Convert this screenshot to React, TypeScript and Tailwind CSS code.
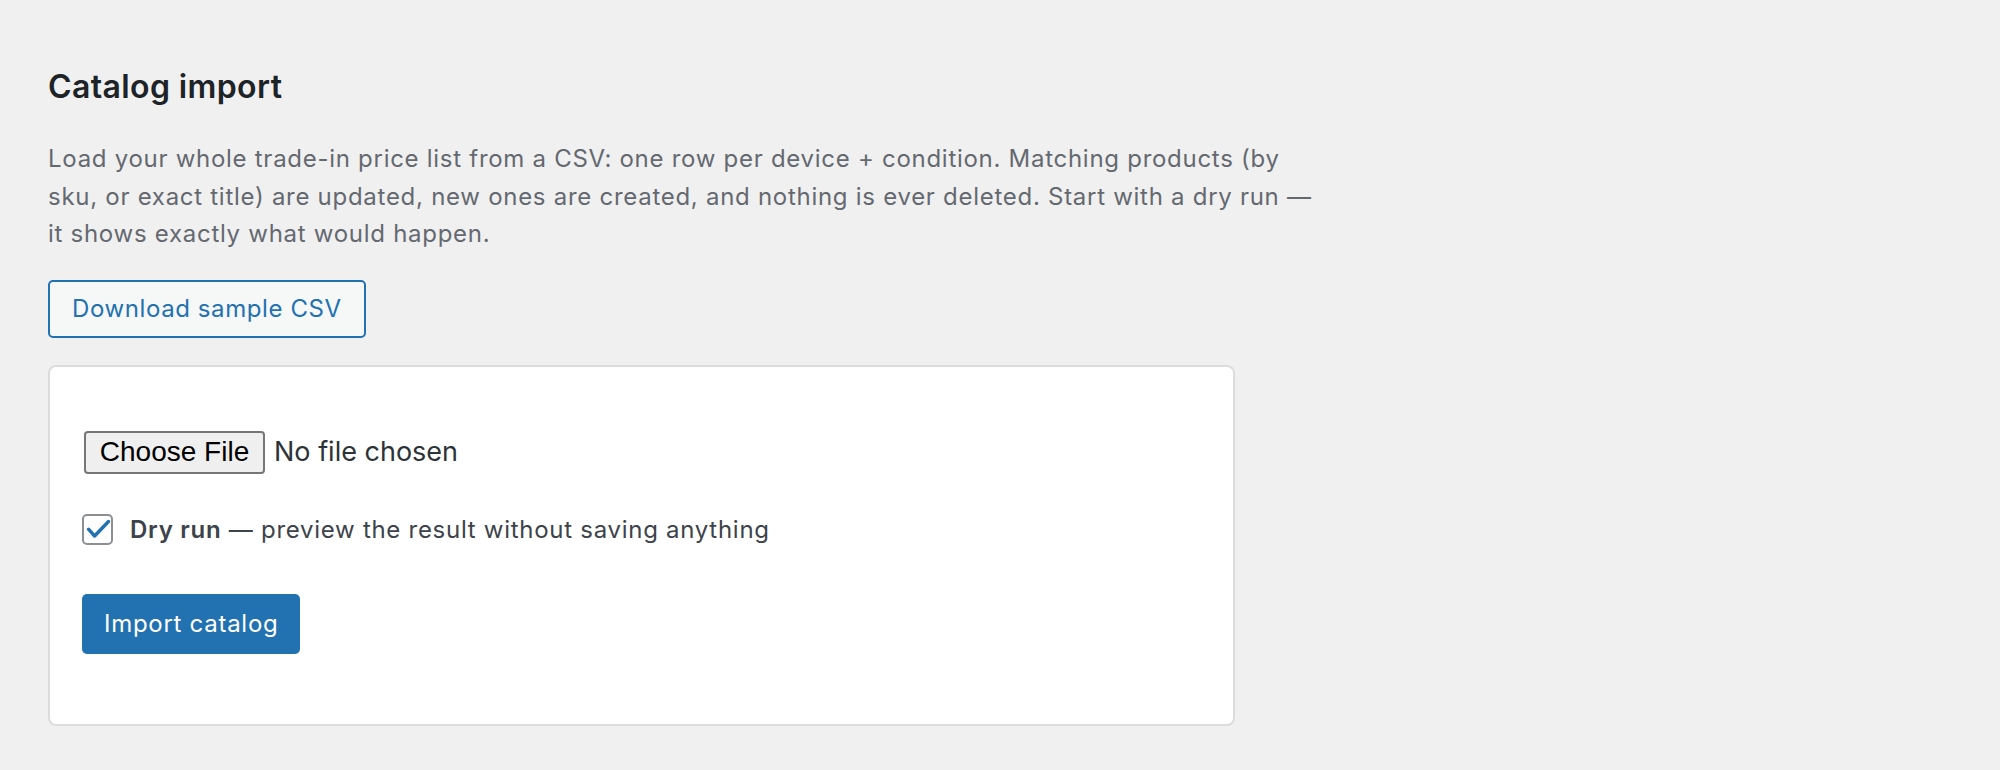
import { useState } from "react";

function CheckIcon() {
  return (
    <svg viewBox="0 0 31 31" className="absolute -left-[2px] -top-[2px] h-[31px] w-[31px]" aria-hidden="true">
      <path
        d="M6.5 15.2 L12.6 22 L26.5 7.5"
        fill="none"
        stroke="#2271b1"
        strokeWidth="3.4"
        strokeLinecap="round"
        strokeLinejoin="round"
      />
    </svg>
  );
}

export default function App() {
  const [dryRun, setDryRun] = useState(true);
  const [fileName, setFileName] = useState<string | null>(null);

  return (
    <div className="min-h-screen bg-[#f0f0f1] pl-12 pt-[66px] font-['Inter','Noto_Sans',sans-serif]">
      <h2 className="text-[32px] leading-[42px] font-semibold tracking-[0.012em] text-[#1d2327]">Catalog import</h2>

      <p className="mt-[32px] max-w-[1270px] text-[24px] leading-[37.5px] tracking-[0.03em] text-[#646970]">
        Load your whole trade-in price list from a CSV: one row per device + condition. Matching products (by
        sku, or exact title) are updated, new ones are created, and nothing is ever deleted. Start with a dry run —
        it shows exactly what would happen.
      </p>

      <a
        href="#"
        className="mt-[27px] inline-flex h-[58px] items-center rounded-[5px] border-2 border-[#2271b1] bg-[#f6f7f7] px-[22px] text-[24px] tracking-[0.025em] text-[#2271b1]"
      >
        Download sample CSV
      </a>

      <form
        onSubmit={(e) => e.preventDefault()}
        className="mt-[27px] w-[1187px] rounded-[8px] border-2 border-[#dcdcde] bg-white pt-[64px] pb-[70px] pl-[32px]"
      >
        <label className="flex h-[43px] items-center gap-[9px] text-[27px]">
          <input
            type="file"
            accept=".csv"
            className="hidden"
            onChange={(e) => setFileName(e.target.files?.[0]?.name ?? null)}
          />
          <span className="ml-[2px] flex h-[43px] w-[181px] items-center justify-center rounded-[4px] border-2 border-[#767676] bg-[#efefef] font-['Liberation_Sans',Arial,sans-serif] text-[28px] text-black">
            Choose File
          </span>
          <span className="text-[#2c3338]">{fileName ?? "No file chosen"}</span>
        </label>

        <label className="mt-[40px] flex items-center gap-[17px] text-[24px] leading-[31px] tracking-[0.03em] text-[#3c434a]">
          <input
            type="checkbox"
            checked={dryRun}
            onChange={(e) => setDryRun(e.target.checked)}
            className="hidden"
          />
          <span className="relative h-[31px] w-[31px] shrink-0 rounded-[5px] border-2 border-[#8c8f94] bg-white">
            {dryRun && <CheckIcon />}
          </span>
          <span>
            <strong className="font-semibold">Dry run</strong> — preview the result without saving anything
          </span>
        </label>

        <button
          type="submit"
          className="mt-[49px] flex h-[60px] items-center rounded-[5px] bg-[#2271b1] px-[22px] text-[24px] tracking-[0.03em] text-white"
        >
          Import catalog
        </button>
      </form>
    </div>
  );
}
